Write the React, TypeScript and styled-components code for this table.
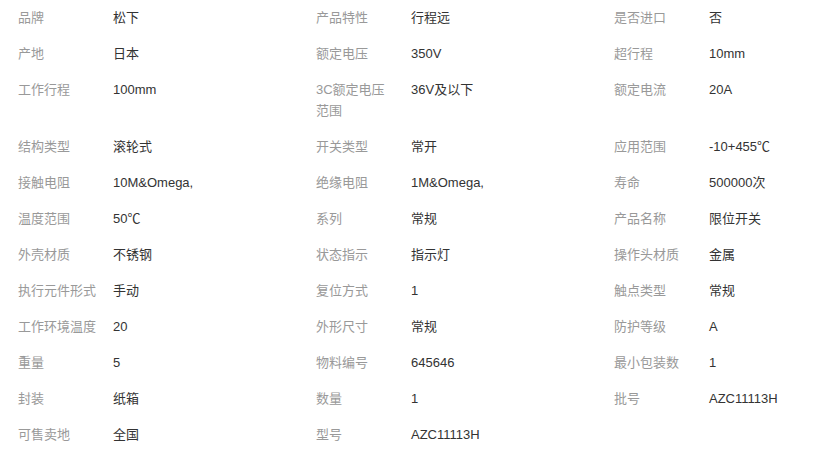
import React from "react";
import styled, { createGlobalStyle } from "styled-components";

const GlobalStyle = createGlobalStyle`
  html, body {
    margin: 0;
    padding: 0;
    background: #ffffff;
  }
  body {
    font-family: "Liberation Sans", Arial, "Noto Sans CJK SC", sans-serif;
    overflow: hidden;
  }
`;

const Wrapper = styled.div`
  width: 826px;
  overflow: hidden;
`;

const Table = styled.div`
  display: grid;
  grid-template-columns: 113px 185px 113px 185px 113px 185px;
  width: 894px;
`;

const Label = styled.div`
  padding: 7px 15px 8px 18px;
  font-size: 13px;
  line-height: 21px;
  color: #999999;
`;

const Value = styled.div`
  padding: 7px 10px 8px 0;
  font-size: 13px;
  line-height: 21px;
  color: #333333;
`;

type Pair = [string, string];

const rows: Pair[][] = [
  [["品牌", "松下"], ["产品特性", "行程远"], ["是否进口", "否"]],
  [["产地", "日本"], ["额定电压", "350V"], ["超行程", "10mm"]],
  [["工作行程", "100mm"], ["3C额定电压范围", "36V及以下"], ["额定电流", "20A"]],
  [["结构类型", "滚轮式"], ["开关类型", "常开"], ["应用范围", "-10+455℃"]],
  [["接触电阻", "10M&Omega,"], ["绝缘电阻", "1M&Omega,"], ["寿命", "500000次"]],
  [["温度范围", "50℃"], ["系列", "常规"], ["产品名称", "限位开关"]],
  [["外壳材质", "不锈钢"], ["状态指示", "指示灯"], ["操作头材质", "金属"]],
  [["执行元件形式", "手动"], ["复位方式", "1"], ["触点类型", "常规"]],
  [["工作环境温度", "20"], ["外形尺寸", "常规"], ["防护等级", "A"]],
  [["重量", "5"], ["物料编号", "645646"], ["最小包装数", "1"]],
  [["封装", "纸箱"], ["数量", "1"], ["批号", "AZC11113H"]],
  [["可售卖地", "全国"], ["型号", "AZC11113H"], ["", ""]],
];

export default function App() {
  return (
    <Wrapper>
      <GlobalStyle />
      <Table>
        {rows.map((row, ri) =>
          row.map(([k, v], ci) => (
            <React.Fragment key={`${ri}-${ci}`}>
              <Label>{k}</Label>
              <Value>{v}</Value>
            </React.Fragment>
          ))
        )}
      </Table>
    </Wrapper>
  );
}
